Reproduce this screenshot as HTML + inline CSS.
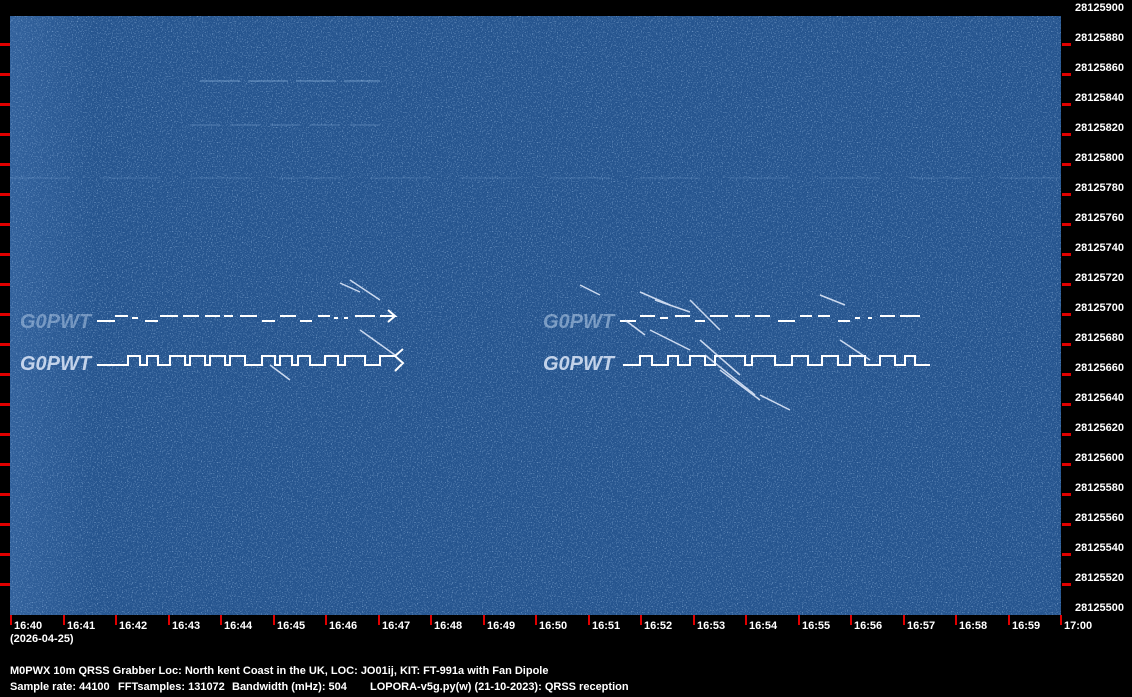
<!DOCTYPE html>
<html><head><meta charset="utf-8"><style>
html,body{margin:0;padding:0;background:#000;width:1132px;height:697px;overflow:hidden}
svg{display:block}
text{font-family:"Liberation Sans",sans-serif;font-weight:bold;font-size:11px;fill:#fff}
</style></head><body>
<svg width="1132" height="697" viewBox="0 0 1132 697" xmlns="http://www.w3.org/2000/svg">
<defs>
<filter id="n" x="0" y="0" width="100%" height="100%">
<feTurbulence type="fractalNoise" baseFrequency="0.8" numOctaves="2" seed="3" result="t"/>
<feColorMatrix in="t" type="matrix" values="0 0 0 0 0.40  0 0 0 0 0.60  0 0 0 0 0.86  2.0 0 0 0 -1.08"/>
</filter>
<linearGradient id="lg" x1="0" x2="1" y1="0" y2="0">
<stop offset="0" stop-color="#6a9ad8" stop-opacity="0.18"/><stop offset="0.08" stop-color="#6a9ad8" stop-opacity="0"/>
</linearGradient>
</defs>
<rect x="10" y="16" width="1051" height="599" fill="#26558f"/>
<rect x="10" y="16" width="1051" height="599" filter="url(#n)"/>
<rect x="10" y="16" width="1051" height="599" fill="url(#lg)"/>
<g stroke="#9fc3ea" stroke-width="1" opacity="0.6">
<line x1="200" y1="81" x2="380" y2="81" stroke-dasharray="40 8"/>
<line x1="190" y1="125" x2="390" y2="125" stroke-dasharray="30 10" opacity="0.6"/>
<line x1="10" y1="178" x2="1060" y2="178" stroke-dasharray="60 30" opacity="0.4"/>
</g>
<g fill="none" stroke="#fff" stroke-width="2">
<path d="M97 321 H115 M115 316 H128 M132 318 H138 M145 321 H158 M160 316 H178 M183 316 H199 M205 316 H220 M224 316 H233 M240 316 H257 M262 321 H275 M280 316 H296 M300 321 H312 M318 316 H330 M334 318 H338 M344 318 H348 M355 316 H375 M380 316 H395 L388 310 M395 316 L388 322"/>
<path d="M97 365 H128 V356 H140 V365 H147 V356 H158 V365 H170 V356 H185 V365 H190 V356 H205 V365 H210 V356 H225 V365 H230 V356 H245 V365 H262 V356 H275 V365 H280 V356 H292 V365 H298 V356 H310 V365 H325 V356 H338 V365 H345 V356 H365 V365 H380 V356 H395 L403 363 L395 371 M395 356 L403 349"/>
<path d="M620 321 H636 M640 316 H655 M660 318 H668 M675 316 H690 M695 321 H705 M710 316 H728 M735 316 H750 M755 316 H770 M778 321 H795 M800 316 H812 M818 316 H830 M838 321 H850 M855 318 H860 M868 318 H872 M880 316 H895 M900 316 H920"/>
<path d="M623 365 H640 V356 H652 V365 H668 V356 H678 V365 H690 V356 H705 V365 H715 V356 H745 V365 H752 V356 H775 V365 H792 V356 H808 V365 H822 V356 H838 V365 H850 V356 H865 V365 H880 V356 H895 V365 H905 V356 H915 V365 H930"/>
</g>
<g stroke="#e8f0ff" stroke-width="1.5" opacity="0.85">
<line x1="340" y1="283" x2="360" y2="292"/><line x1="350" y1="280" x2="380" y2="300"/>
<line x1="360" y1="330" x2="395" y2="355"/><line x1="270" y1="365" x2="290" y2="380"/>
<line x1="640" y1="292" x2="670" y2="305"/><line x1="655" y1="300" x2="690" y2="312"/>
<line x1="700" y1="340" x2="740" y2="375"/><line x1="705" y1="355" x2="755" y2="395"/>
<line x1="720" y1="370" x2="760" y2="400"/><line x1="760" y1="395" x2="790" y2="410"/>
<line x1="625" y1="320" x2="645" y2="335"/><line x1="650" y1="330" x2="690" y2="350"/>
<line x1="820" y1="295" x2="845" y2="305"/><line x1="840" y1="340" x2="870" y2="360"/>
<line x1="690" y1="300" x2="720" y2="330"/><line x1="580" y1="285" x2="600" y2="295"/>
</g>
<g>
<text x="20" y="328" style="font-size:20px;font-style:italic;fill:#c8dcf4;opacity:.45">G0PWT</text>
<text x="20" y="370" style="font-size:20px;font-style:italic;fill:#e8f0ff;opacity:.8">G0PWT</text>
<text x="543" y="328" style="font-size:20px;font-style:italic;fill:#c8dcf4;opacity:.5">G0PWT</text>
<text x="543" y="370" style="font-size:20px;font-style:italic;fill:#e8f0ff;opacity:.8">G0PWT</text>
</g>
<g fill="#e00000">
<rect x="0" y="43" width="10" height="3"/><rect x="0" y="73" width="10" height="3"/><rect x="0" y="103" width="10" height="3"/><rect x="0" y="133" width="10" height="3"/><rect x="0" y="163" width="10" height="3"/><rect x="0" y="193" width="10" height="3"/><rect x="0" y="223" width="10" height="3"/><rect x="0" y="253" width="10" height="3"/><rect x="0" y="283" width="10" height="3"/><rect x="0" y="313" width="10" height="3"/><rect x="0" y="343" width="10" height="3"/><rect x="0" y="373" width="10" height="3"/><rect x="0" y="403" width="10" height="3"/><rect x="0" y="433" width="10" height="3"/><rect x="0" y="463" width="10" height="3"/><rect x="0" y="493" width="10" height="3"/><rect x="0" y="523" width="10" height="3"/><rect x="0" y="553" width="10" height="3"/><rect x="0" y="583" width="10" height="3"/>
<rect x="1062" y="43" width="9" height="3"/><rect x="1062" y="73" width="9" height="3"/><rect x="1062" y="103" width="9" height="3"/><rect x="1062" y="133" width="9" height="3"/><rect x="1062" y="163" width="9" height="3"/><rect x="1062" y="193" width="9" height="3"/><rect x="1062" y="223" width="9" height="3"/><rect x="1062" y="253" width="9" height="3"/><rect x="1062" y="283" width="9" height="3"/><rect x="1062" y="313" width="9" height="3"/><rect x="1062" y="343" width="9" height="3"/><rect x="1062" y="373" width="9" height="3"/><rect x="1062" y="403" width="9" height="3"/><rect x="1062" y="433" width="9" height="3"/><rect x="1062" y="463" width="9" height="3"/><rect x="1062" y="493" width="9" height="3"/><rect x="1062" y="523" width="9" height="3"/><rect x="1062" y="553" width="9" height="3"/><rect x="1062" y="583" width="9" height="3"/>
<rect x="10" y="615" width="2" height="10"/><rect x="63" y="615" width="2" height="10"/><rect x="115" y="615" width="2" height="10"/><rect x="168" y="615" width="2" height="10"/><rect x="220" y="615" width="2" height="10"/><rect x="273" y="615" width="2" height="10"/><rect x="325" y="615" width="2" height="10"/><rect x="378" y="615" width="2" height="10"/><rect x="430" y="615" width="2" height="10"/><rect x="483" y="615" width="2" height="10"/><rect x="535" y="615" width="2" height="10"/><rect x="588" y="615" width="2" height="10"/><rect x="640" y="615" width="2" height="10"/><rect x="693" y="615" width="2" height="10"/><rect x="745" y="615" width="2" height="10"/><rect x="798" y="615" width="2" height="10"/><rect x="850" y="615" width="2" height="10"/><rect x="903" y="615" width="2" height="10"/><rect x="955" y="615" width="2" height="10"/><rect x="1008" y="615" width="2" height="10"/><rect x="1060" y="615" width="2" height="10"/>
</g>
<g>
<text x="1075" y="11">28125900</text><text x="1075" y="41">28125880</text><text x="1075" y="71">28125860</text><text x="1075" y="101">28125840</text><text x="1075" y="131">28125820</text><text x="1075" y="161">28125800</text><text x="1075" y="191">28125780</text><text x="1075" y="221">28125760</text><text x="1075" y="251">28125740</text><text x="1075" y="281">28125720</text><text x="1075" y="311">28125700</text><text x="1075" y="341">28125680</text><text x="1075" y="371">28125660</text><text x="1075" y="401">28125640</text><text x="1075" y="431">28125620</text><text x="1075" y="461">28125600</text><text x="1075" y="491">28125580</text><text x="1075" y="521">28125560</text><text x="1075" y="551">28125540</text><text x="1075" y="581">28125520</text><text x="1075" y="611">28125500</text>
<text x="14" y="629">16:40</text><text x="67" y="629">16:41</text><text x="119" y="629">16:42</text><text x="172" y="629">16:43</text><text x="224" y="629">16:44</text><text x="277" y="629">16:45</text><text x="329" y="629">16:46</text><text x="382" y="629">16:47</text><text x="434" y="629">16:48</text><text x="487" y="629">16:49</text><text x="539" y="629">16:50</text><text x="592" y="629">16:51</text><text x="644" y="629">16:52</text><text x="697" y="629">16:53</text><text x="749" y="629">16:54</text><text x="802" y="629">16:55</text><text x="854" y="629">16:56</text><text x="907" y="629">16:57</text><text x="959" y="629">16:58</text><text x="1012" y="629">16:59</text><text x="1064" y="629">17:00</text>
<text x="10" y="642">(2026-04-25)</text>
<text x="10" y="674">M0PWX 10m QRSS Grabber Loc: North kent Coast in the UK, LOC: JO01ij, KIT: FT-991a with Fan Dipole</text>
<text x="10" y="690">Sample rate: 44100</text><text x="118" y="690">FFTsamples: 131072</text><text x="232" y="690">Bandwidth (mHz): 504</text><text x="370" y="690">LOPORA-v5g.py(w) (21-10-2023): QRSS reception</text>
</g>
</svg>
</body></html>
